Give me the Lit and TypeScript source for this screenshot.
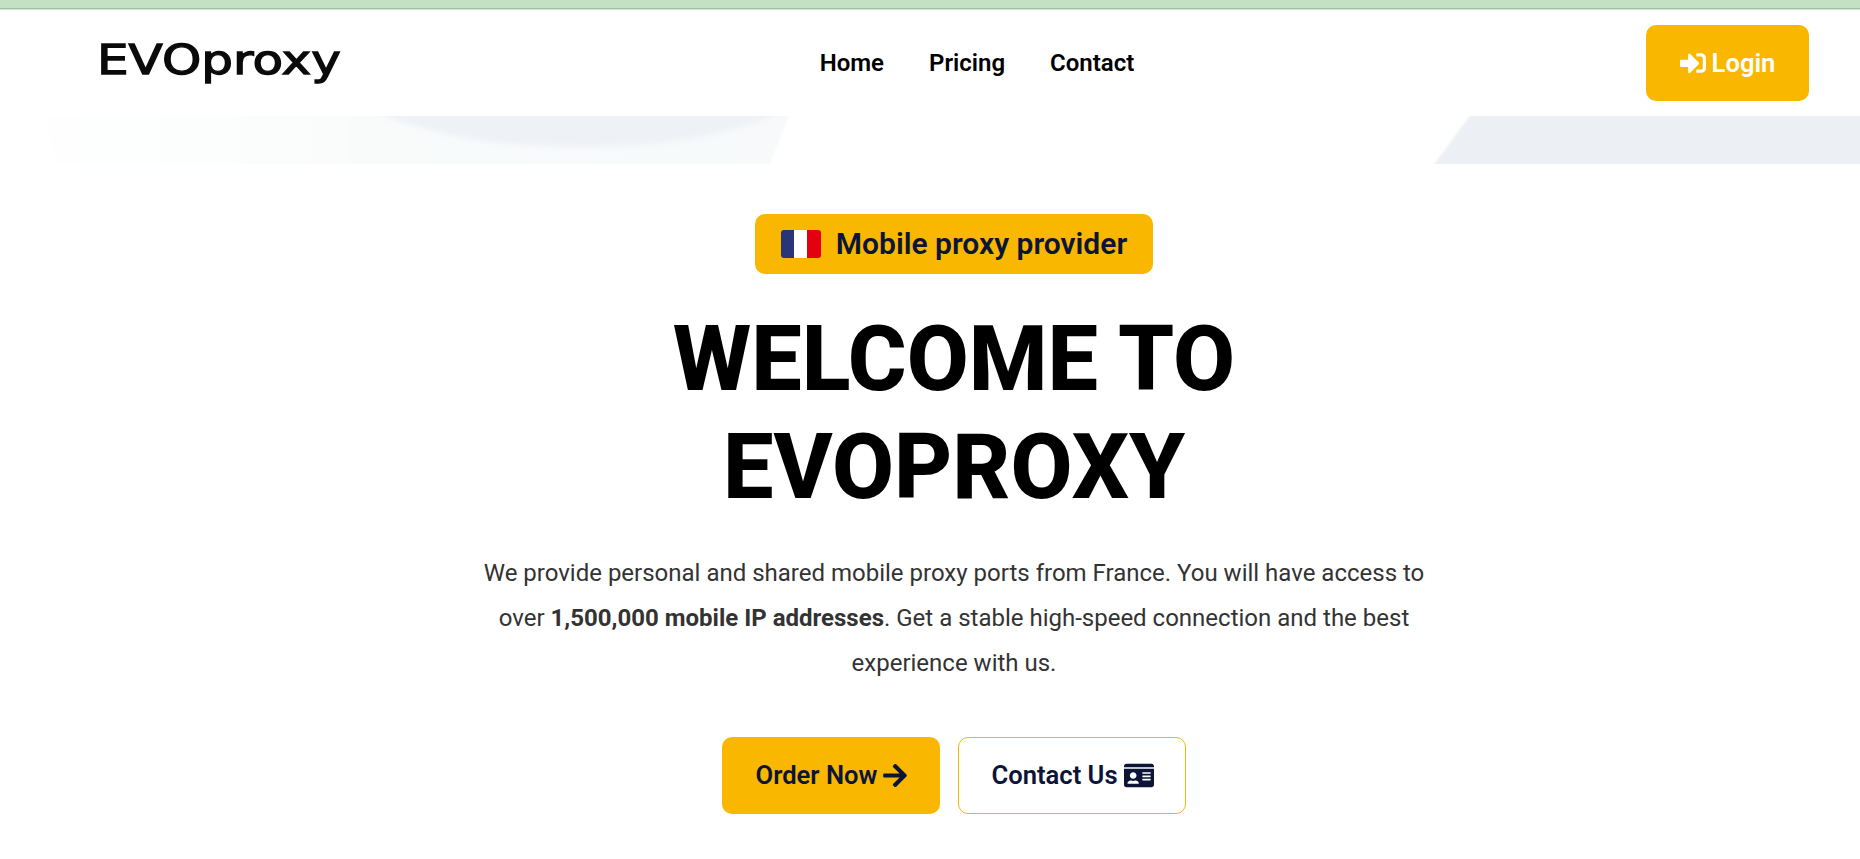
import { LitElement, css, html, svg } from "lit";
import { customElement } from "lit/decorators.js";

const arrowRight = svg`<path d="M190.5 66.9l22.2-22.2c9.4-9.4 24.6-9.4 33.9 0L441 239c9.4 9.4 9.4 24.6 0 33.9L246.6 467.3c-9.4 9.4-24.6 9.4-33.9 0l-22.2-22.2c-9.5-9.5-9.3-25 .4-34.3L311.4 296H24c-13.3 0-24-10.7-24-24v-32c0-13.3 10.7-24 24-24h287.4L190.9 101.2c-9.8-9.3-10-24.8-.4-34.3z"/>`;
const signIn = svg`<path d="M416 448h-84c-6.6 0-12-5.4-12-12v-40c0-6.6 5.4-12 12-12h84c17.7 0 32-14.3 32-32V160c0-17.7-14.3-32-32-32h-84c-6.6 0-12-5.4-12-12V76c0-6.6 5.4-12 12-12h84c53 0 96 43 96 96v192c0 53-43 96-96 96zm-47-201L201 79c-15-15-41-4.5-41 17v96H24c-13.3 0-24 10.7-24 24v96c0 13.3 10.7 24 24 24h136v96c0 21.5 26 32 41 17l168-168c9.3-9.4 9.3-24.6 0-34z"/>`;
const idCard = svg`<path d="M528 32H48C21.5 32 0 53.5 0 80v16h576V80c0-26.5-21.5-48-48-48zM0 432c0 26.5 21.5 48 48 48h480c26.5 0 48-21.5 48-48V128H0v304zm352-232c0-4.4 3.6-8 8-8h144c4.4 0 8 3.6 8 8v16c0 4.4-3.6 8-8 8H360c-4.4 0-8-3.6-8-8v-16zm0 64c0-4.4 3.6-8 8-8h144c4.4 0 8 3.6 8 8v16c0 4.4-3.6 8-8 8H360c-4.4 0-8-3.6-8-8v-16zm0 64c0-4.4 3.6-8 8-8h144c4.4 0 8 3.6 8 8v16c0 4.4-3.6 8-8 8H360c-4.4 0-8-3.6-8-8v-16zM176 192c35.3 0 64 28.7 64 64s-28.7 64-64 64-64-28.7-64-64 28.7-64 64-64zM67.1 396.2C75.5 370.5 99.6 352 128 352h8.2c12.3 5.1 25.7 8 39.8 8s27.6-2.9 39.8-8h8.2c28.4 0 52.5 18.5 60.9 44.2 3.2 9.9-5.2 19.8-15.6 19.8H82.7c-10.4 0-18.8-10-15.6-19.8z"/>`;

@customElement("app-root")
export class AppRoot extends LitElement {
  static styles = css`
    :host {
      display: block;
      min-height: 859px;
      background: #fff;
      font-family: Roboto, "Liberation Sans", sans-serif;
      color: #000;
      overflow: hidden;
    }

    .topbar {
      height: 8px;
      background: #c4e1c4;
      border-bottom: 1px solid #a3bda6;
      box-shadow: 0 1px 0 #d4e4d6;
    }

    .nav {
      display: grid;
      grid-template-columns: 1fr auto 1fr;
      align-items: center;
      height: 107px;
      padding: 0 51px 0 97px;
    }

    .logo {
      padding-bottom: 5px;
      font-family: "DejaVu Sans", sans-serif;
      font-size: 41px;
      line-height: 1;
      font-weight: 400;
      color: #0a0a0a;
      -webkit-text-stroke: 1.3px #0a0a0a;
      transform: scaleX(1.22);
      transform-origin: left center;
    }

    .links {
      display: flex;
      gap: 45px;
      padding-left: 48px;
      font-size: 24px;
      font-weight: 600;
    }

    .login {
      justify-self: end;
      display: flex;
      align-items: center;
      justify-content: center;
      gap: 6px;
      width: 163px;
      height: 76px;
      border-radius: 10px;
      background: #fab700;
      color: #fff;
      font-size: 25.6px;
      font-weight: 600;
    }

    .login svg {
      width: 26px;
      height: 26px;
      fill: #fff;
    }

    .strip {
      display: block;
      width: 100%;
      height: 48px;
    }

    .hero {
      display: flex;
      flex-direction: column;
      align-items: center;
      padding: 50px 0 0 48px;
    }

    .pill {
      box-sizing: border-box;
      display: flex;
      align-items: center;
      gap: 15px;
      height: 60px;
      padding: 0 26px 1px;
      border-radius: 10px;
      background: #fab700;
      color: #0c1537;
      font-size: 30px;
      font-weight: 600;
    }

    .flag {
      display: flex;
      width: 40px;
      height: 28px;
      border-radius: 3px;
      overflow: hidden;
    }

    .flag span {
      flex: 1;
    }

    .blue {
      background: #2a3479;
    }

    .white {
      background: #fff;
    }

    .red {
      background: #e3000f;
    }

    h1 {
      margin: 32px 0 0;
      font-size: 90px;
      line-height: 108px;
      font-weight: 800;
      text-align: center;
    }

    p {
      margin: 29px 0 0;
      width: 960px;
      font-size: 24px;
      line-height: 45px;
      color: #333;
      text-align: center;
    }

    p b {
      font-weight: 700;
    }

    .actions {
      display: flex;
      gap: 18px;
      margin-top: 51px;
      margin-right: 1px;
    }

    .btn {
      box-sizing: border-box;
      display: flex;
      align-items: center;
      justify-content: center;
      gap: 6px;
      height: 77px;
      padding: 0 0 1px 2px;
      border-radius: 10px;
      color: #0c1537;
      font-size: 25.6px;
      font-weight: 600;
    }

    .btn svg {
      fill: #0c1537;
    }

    .order {
      width: 218px;
      background: #fab700;
    }

    .order svg {
      width: 24px;
      height: 27px;
    }

    .contact {
      width: 228px;
      border: 1px solid #fab700;
      background: #fff;
    }

    .contact svg {
      width: 30px;
      height: 27px;
    }
  `;

  render() {
    return html`
      <div class="topbar"></div>
      <header class="nav">
        <div class="logo">EVOproxy</div>
        <nav class="links">
          <span>Home</span>
          <span>Pricing</span>
          <span>Contact</span>
        </nav>
        <div class="login">
          <svg viewBox="0 0 512 512">${signIn}</svg>
          <span>Login</span>
        </div>
      </header>
      <svg class="strip" viewBox="0 0 1860 48" preserveAspectRatio="none">
        <defs>
          <linearGradient id="fade" x1="0" x2="1" y1="0" y2="0">
            <stop offset="0" stop-color="#fefefe"></stop>
            <stop offset="0.15" stop-color="#fdfefe"></stop>
            <stop offset="0.35" stop-color="#fbfcfc"></stop>
            <stop offset="0.42" stop-color="#f9fbfb"></stop>
            <stop offset="1" stop-color="#f7f9fa"></stop>
          </linearGradient>
          <filter id="soft" x="-5%" y="-30%" width="110%" height="160%">
            <feGaussianBlur stdDeviation="3"></feGaussianBlur>
          </filter>
          <filter id="edge" x="-5%" y="-30%" width="110%" height="160%">
            <feGaussianBlur stdDeviation="1.2"></feGaussianBlur>
          </filter>
        </defs>
        <path d="M40 -20H797L762 68H60Z" fill="url(#fade)" filter="url(#edge)"></path>
        <path
          d="M360 -10C440 25 520 31 590 31C680 30 740 15 795 -10Z"
          fill="#eef1f5"
          filter="url(#soft)"
        ></path>
        <path d="M1484 -20H1880V68H1420Z" fill="#ecf0f4" filter="url(#edge)"></path>
      </svg>
      <main class="hero">
        <div class="pill">
          <span class="flag">
            <span class="blue"></span><span class="white"></span><span class="red"></span>
          </span>
          <span>Mobile proxy provider</span>
        </div>
        <h1>WELCOME TO<br />EVOPROXY</h1>
        <p>
          We provide personal and shared mobile proxy ports from France. You will have access to
          over <b>1,500,000 mobile IP addresses</b>. Get a stable high-speed connection and the best
          experience with us.
        </p>
        <div class="actions">
          <div class="btn order">
            <span>Order Now</span>
            <svg viewBox="0 0 448 512">${arrowRight}</svg>
          </div>
          <div class="btn contact">
            <span>Contact Us</span>
            <svg viewBox="0 0 576 512">${idCard}</svg>
          </div>
        </div>
      </main>
    `;
  }
}
